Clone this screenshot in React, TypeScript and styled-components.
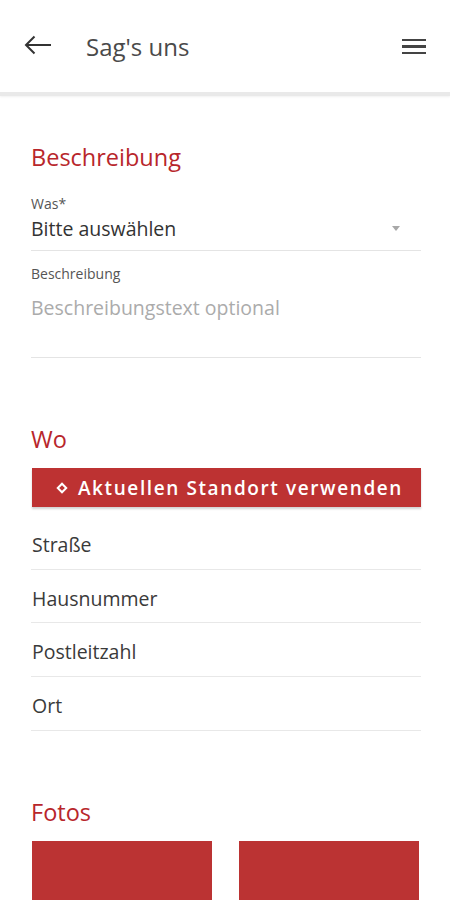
import React from 'react';
import styled, { createGlobalStyle } from 'styled-components';

const GlobalStyle = createGlobalStyle`
  html, body {
    margin: 0;
    padding: 0;
    background: #ffffff;
  }
  body {
    font-family: "Open Sans", "Noto Sans", "Liberation Sans", sans-serif;
    color: #333333;
  }
  * {
    box-sizing: border-box;
  }
`;

const red = '#b8262b';
const buttonRed = '#bd3232';

const addressFields = ['Straße', 'Hausnummer', 'Postleitzahl', 'Ort'];

const App = () => {
  return (
    <>
      <GlobalStyle />
      <Page>
        <Header>
          <BackButton aria-label="Zurück">
            <svg width="28" height="20" viewBox="0 0 28 20" fill="none">
              <path d="M2 10H27" stroke="#333" strokeWidth="2" />
              <path d="M10.5 1.5L2 10l8.5 8.5" stroke="#333" strokeWidth="2" />
            </svg>
          </BackButton>
          <Title>Sag's uns</Title>
          <MenuButton aria-label="Menü">
            <MenuLine />
            <MenuLine />
            <MenuLine />
          </MenuButton>
        </Header>

        <Main>
          <SectionTitle $top={46}>Beschreibung</SectionTitle>

          <SelectField>
            <FieldLabel>Was*</FieldLabel>
            <SelectValue>
              <span>Bitte auswählen</span>
              <Caret />
            </SelectValue>
          </SelectField>

          <TextAreaField>
            <FieldLabel>Beschreibung</FieldLabel>
            <Placeholder>Beschreibungstext optional</Placeholder>
          </TextAreaField>

          <SectionTitle $top={66}>Wo</SectionTitle>

          <LocationButton>
            <Diamond />
            Aktuellen Standort verwenden
          </LocationButton>

          <AddressList>
            {addressFields.map((field) => (
              <AddressRow key={field}>{field}</AddressRow>
            ))}
          </AddressList>

          <SectionTitle $top={66}>Fotos</SectionTitle>

          <PhotoGrid>
            <PhotoSlot />
            <PhotoSlot />
          </PhotoGrid>
        </Main>
      </Page>
    </>
  );
};

export default App;

const Page = styled.div`
  width: 450px;
  height: 900px;
  background: #fff;
  overflow: hidden;
`;

const Header = styled.header`
  height: 96px;
  display: flex;
  align-items: center;
  padding: 0 24px 0 24px;
  background: #fff;
  border-bottom: 4px solid #e9e9e9;
  box-shadow: 0 1px 2px rgba(0, 0, 0, 0.06);
`;

const BackButton = styled.div`
  display: flex;
  align-items: center;
  width: 28px;
  height: 20px;
  margin-top: -2px;
`;

const Title = styled.h1`
  margin: 0 0 0 34px;
  flex: 1;
  font-size: 24px;
  font-weight: 400;
  color: #4a4a4a;
`;

const MenuButton = styled.div`
  display: flex;
  flex-direction: column;
  gap: 4.2px;
  width: 24px;
  margin-top: 1px;
`;

const MenuLine = styled.span`
  display: block;
  height: 2.5px;
  background: #444;
`;

const Main = styled.main`
  padding: 0 29px 0 31px;
`;

const SectionTitle = styled.h2<{ $top: number }>`
  margin: ${({ $top }) => $top}px 0 0 0;
  font-size: 23.5px;
  line-height: 30px;
  font-weight: 400;
  color: ${red};
`;

const SelectField = styled.div`
  margin-top: 23px;
  padding-bottom: 8px;
  border-bottom: 1px solid #e4e4e4;
`;

const FieldLabel = styled.div`
  font-size: 14px;
  line-height: 18px;
  color: #555;
`;

const SelectValue = styled.div`
  display: flex;
  align-items: center;
  justify-content: space-between;
  margin-top: 3px;
  padding-right: 21px;
  font-size: 19.5px;
  line-height: 26px;
  color: #333;
`;

const Caret = styled.span`
  width: 0;
  height: 0;
  margin-top: -2px;
  border-left: 4.5px solid transparent;
  border-right: 4.5px solid transparent;
  border-top: 5px solid #a8a8a8;
`;

const TextAreaField = styled.div`
  margin-top: 14px;
  padding-bottom: 36px;
  border-bottom: 1px solid #e4e4e4;
`;

const Placeholder = styled.div`
  margin-top: 12px;
  font-size: 19.5px;
  line-height: 26px;
  color: #ababab;
`;

const LocationButton = styled.div`
  margin: 14px 0 0 1px;
  height: 39px;
  display: flex;
  align-items: center;
  justify-content: center;
  gap: 12px;
  padding-left: 8px;
  background: ${buttonRed};
  color: #fff;
  font-size: 19px;
  font-weight: 600;
  letter-spacing: 1.6px;
  box-shadow: 0 2px 2px rgba(0, 0, 0, 0.18);
`;

const Diamond = styled.span`
  width: 8px;
  height: 8px;
  border: 2px solid #fff;
  transform: rotate(45deg);
  flex-shrink: 0;
`;

const AddressList = styled.div`
  margin-top: 9px;
`;

const AddressRow = styled.div`
  padding: 16px 0 10.7px 1px;
  font-size: 19.5px;
  line-height: 26px;
  color: #3a3a3a;
  border-bottom: 1px solid #e8e8e8;
`;

const PhotoGrid = styled.div`
  display: grid;
  grid-template-columns: 180px 180px;
  gap: 27px;
  margin: 14px 0 0 1px;
`;

const PhotoSlot = styled.div`
  height: 120px;
  background: #bb3333;
`;
